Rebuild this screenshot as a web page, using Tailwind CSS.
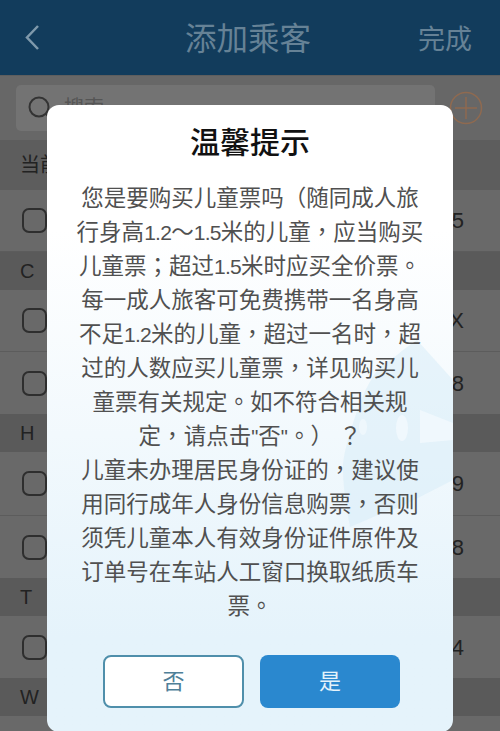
<!DOCTYPE html>
<html lang="zh-CN">
<head>
    <meta charset="UTF-8">
    <meta name="viewport" content="width=device-width, initial-scale=1.0">
    <title>添加乘客</title>
    <script src="https://cdn.jsdelivr.net/npm/@tailwindcss/browser@4"></script>
</head>
<body class="bg-[#696969] font-['Liberation_Sans','Noto_Sans_CJK_SC',sans-serif]">
<div class="relative w-[500px] h-[731px] overflow-hidden">
    <!-- Header -->
    <div class="h-[75px] bg-[#123c5c] flex items-center justify-between pt-[5px] pl-[24px] pr-[28px] text-[#668296]">
        <svg class="w-[16px] h-[27px] -mt-[5px]" viewBox="0 0 16 27" fill="none" stroke="#7f99ab" stroke-width="2.5">
            <path d="M14 2 L3 13.5 L14 25" />
        </svg>
        <span class="text-[31.5px] ml-[38px]">添加乘客</span>
        <span class="text-[27px]">完成</span>
    </div>

    <!-- Search -->
    <div class="h-[65px] bg-[#676767] border-t border-[#5e5e5e] flex items-center gap-[14px] pl-[16px] pr-[16px]">
        <div class="w-[419px] h-[46px] bg-[#737373] rounded-[5px] flex items-center gap-[12px] pl-[12px] text-[#555555] text-[20px]">
            <svg class="w-[24px] h-[24px]" viewBox="0 0 24 24" fill="none" stroke="#333333" stroke-width="2">
                <circle cx="11" cy="11" r="9.5" />
                <path d="M18 18 L22 22" />
            </svg>
            <span>搜索</span>
        </div>
        <svg class="w-[34px] h-[34px]" viewBox="0 0 34 34" fill="none" stroke="#8f6a50" stroke-width="1.5">
            <circle cx="17" cy="17" r="15.5" />
            <path d="M6 17 H28 M17 6 V28" />
        </svg>
    </div>

    <!-- Passenger list -->
    <div class="text-[#222222] text-[20px]">
        <div class="h-[50px] bg-[#5d5d5d] flex items-center pl-[20px]">当前</div>
        <div class="h-[62px] flex items-center justify-between pl-[22px] pr-[36px] border-b border-[#5c5c5c]">
            <span class="w-[25px] h-[25px] border-2 border-[#2e2e2e] rounded-[7px]"></span><span class="text-[22px]">5</span>
        </div>
        <div class="h-[38px] bg-[#5a5a5a] flex items-center pl-[20px]">C</div>
        <div class="h-[62px] flex items-center justify-between pl-[22px] pr-[36px] border-b border-[#5c5c5c]">
            <span class="w-[25px] h-[25px] border-2 border-[#2e2e2e] rounded-[7px]"></span><span class="text-[22px]">X</span>
        </div>
        <div class="h-[62px] flex items-center justify-between pl-[22px] pr-[36px]">
            <span class="w-[25px] h-[25px] border-2 border-[#2e2e2e] rounded-[7px]"></span><span class="text-[22px]">8</span>
        </div>
        <div class="h-[38px] bg-[#5a5a5a] flex items-center pl-[20px]">H</div>
        <div class="h-[64px] flex items-center justify-between pl-[22px] pr-[36px] border-b border-[#5c5c5c]">
            <span class="w-[25px] h-[25px] border-2 border-[#2e2e2e] rounded-[7px]"></span><span class="text-[22px]">9</span>
        </div>
        <div class="h-[62px] flex items-center justify-between pl-[22px] pr-[36px]">
            <span class="w-[25px] h-[25px] border-2 border-[#2e2e2e] rounded-[7px]"></span><span class="text-[22px]">8</span>
        </div>
        <div class="h-[38px] bg-[#5a5a5a] flex items-center pl-[20px]">T</div>
        <div class="h-[62px] flex items-center justify-between pl-[22px] pr-[36px]">
            <span class="w-[25px] h-[25px] border-2 border-[#2e2e2e] rounded-[7px]"></span><span class="text-[22px]">4</span>
        </div>
        <div class="h-[38px] bg-[#5a5a5a] flex items-center pl-[20px]">W</div>
    </div>

    <!-- Dialog -->
    <div class="absolute left-[47px] top-[105px] w-[406px] h-[627px] rounded-[12px] overflow-hidden bg-gradient-to-b from-white from-[20%] to-[#e5f3fb] to-[85%]">
        <!-- watermark -->
        <svg class="absolute left-[250px] top-[215px] w-[156px] h-[240px]" viewBox="0 0 156 240">
            <path fill="#d6ebf8" fill-opacity="0.5" d="M120 20 C105 30 95 40 83 47 C68 65 60 90 53 113 C48 130 46 140 46 147 C46 170 50 190 53 207 C70 200 85 192 103 187 L156 160 V60 Z" />
            <ellipse cx="105" cy="108" rx="6" ry="13" fill="#f0f8fd" />
            <ellipse cx="66" cy="107" rx="4" ry="8" fill="#eef7fc" />
            <path d="M123 90 L156 103 V120 L123 123 Z" fill="#f0f8fd" />
        </svg>
        <div class="relative">
            <h2 class="pt-[19px] text-center text-[30px] leading-[38px] font-medium text-[#111111]">温馨提示</h2>
            <div class="mt-[20px] text-center text-[22.5px] text-[#505050]">
                <div class="h-[34px] leading-[34px]">您是要购买儿童票吗<span lang="zh-TW" class="leading-none font-['Noto_Sans_CJK_TC']">（</span>随同成人旅</div>
                <div class="h-[34px] leading-[34px]">行身高<span class="leading-none text-[21px] tracking-[-0.7px]">1.2</span>～<span class="leading-none text-[21px] tracking-[-0.7px]">1.5</span>米的儿童<span lang="zh-TW" class="leading-none font-['Noto_Sans_CJK_TC']">，</span>应当购买</div>
                <div class="h-[34px] leading-[34px]">儿童票<span lang="zh-TW" class="leading-none font-['Noto_Sans_CJK_TC']">；</span>超过<span class="leading-none text-[21px] tracking-[-0.7px]">1.5</span>米时应买全价票<span lang="zh-TW" class="leading-none font-['Noto_Sans_CJK_TC']">。</span></div>
                <div class="h-[34px] leading-[34px]">每一成人旅客可免费携带一名身高</div>
                <div class="h-[34px] leading-[34px]">不足<span class="leading-none text-[21px] tracking-[-0.7px]">1.2</span>米的儿童<span lang="zh-TW" class="leading-none font-['Noto_Sans_CJK_TC']">，</span>超过一名时<span lang="zh-TW" class="leading-none font-['Noto_Sans_CJK_TC']">，</span>超</div>
                <div class="h-[34px] leading-[34px]">过的人数应买儿童票<span lang="zh-TW" class="leading-none font-['Noto_Sans_CJK_TC']">，</span>详见购买儿</div>
                <div class="h-[34px] leading-[34px]">童票有关规定<span lang="zh-TW" class="leading-none font-['Noto_Sans_CJK_TC']">。</span>如不符合相关规</div>
                <div class="h-[34px] leading-[34px]">定<span lang="zh-TW" class="leading-none font-['Noto_Sans_CJK_TC']">，</span>请点击<span class="leading-none text-[20px]">"</span>否<span class="leading-none text-[20px]">"</span><span lang="zh-TW" class="leading-none font-['Noto_Sans_CJK_TC']">。）</span><span lang="zh-TW" class="leading-none ml-[6px] font-['Noto_Sans_CJK_TC']">？</span></div>
                <div class="h-[34px] leading-[34px]">儿童未办理居民身份证的<span lang="zh-TW" class="leading-none font-['Noto_Sans_CJK_TC']">，</span>建议使</div>
                <div class="h-[34px] leading-[34px]">用同行成年人身份信息购票<span lang="zh-TW" class="leading-none font-['Noto_Sans_CJK_TC']">，</span>否则</div>
                <div class="h-[34px] leading-[34px]">须凭儿童本人有效身份证件原件及</div>
                <div class="h-[34px] leading-[34px]">订单号在车站人工窗口换取纸质车</div>
                <div class="h-[34px] leading-[34px]">票<span lang="zh-TW" class="leading-none font-['Noto_Sans_CJK_TC']">。</span></div>
            </div>
            <div class="absolute left-[56px] top-[550px] flex gap-[16px] text-[22px]">
                <button class="w-[141px] h-[53px] bg-white border-2 border-[#4f8fab] rounded-[8px] text-[#4f8098]">否</button>
                <button class="w-[140px] h-[53px] bg-[#2a88cf] rounded-[8px] text-[#e4f3fb]">是</button>
            </div>
        </div>
    </div>
</div>
</body>
</html>
